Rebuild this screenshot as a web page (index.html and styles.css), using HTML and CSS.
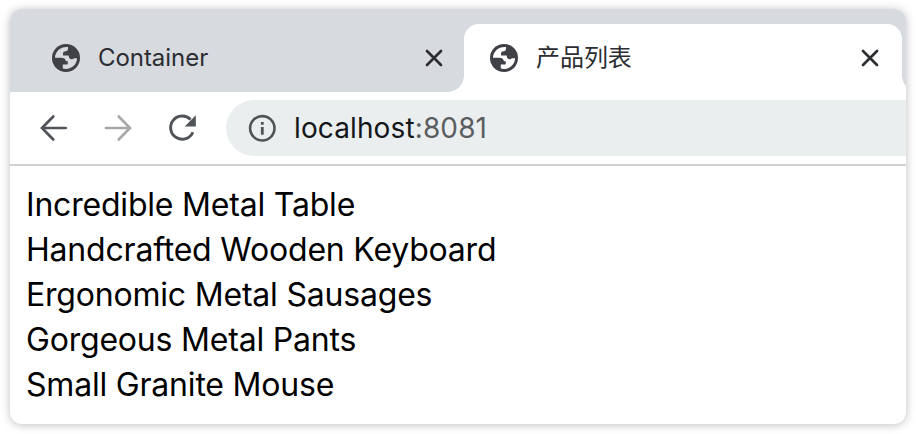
FILE: index.html
```html
<!DOCTYPE html>
<html lang="zh">
<head>
<meta charset="utf-8">
<title>产品列表</title>
<link rel="stylesheet" href="styles.css">
</head>
<body>
<svg class="defs" width="0" height="0" aria-hidden="true">
  <symbol id="globe" viewBox="0 0 28 28">
    <circle cx="14" cy="14" r="14" fill="#3f4147"/>
    <path class="land" d="M16 3 C9 2.2 3.2 7 3 13.8 H9 Q13.2 13.8 14 17.2 H15.8 V19.4 Q15.8 20.6 14 20.6 H10.8 V24.6 C18.5 26.4 25 21 25 14.3 H22 Q20.5 15.6 18.6 15 Q16.6 14.2 16.6 11.6 H11 V9.6 Q11 7.2 13.5 7.2 H14 Q16 7 16 5 Z"/>
  </symbol>
  <symbol id="close" viewBox="0 0 18 18">
    <path d="M2 2 L16 16 M16 2 L2 16" fill="none" stroke="#2b2d30" stroke-width="2.7" stroke-linecap="round"/>
  </symbol>
</svg>
<main class="window">
  <div class="tabs">
    <div class="tab">
      <svg class="globe"><use href="#globe"/></svg>
      <span class="title">Container</span>
      <svg class="close"><use href="#close"/></svg>
    </div>
    <div class="tab active">
      <svg class="globe"><use href="#globe"/></svg>
      <span class="title">产品列表</span>
      <svg class="close"><use href="#close"/></svg>
    </div>
  </div>
  <div class="toolbar">
    <svg class="nav" viewBox="0 0 28 28"><path d="M25.7 14 H2 M13.3 2.5 L2 14 L13.3 25.5" fill="none" stroke="#505357" stroke-width="2.7" stroke-linecap="round"/></svg>
    <svg class="nav" viewBox="0 0 28 28"><path d="M2 14 H26 M14.7 2.5 L26 14 L14.7 25.5" fill="none" stroke="#a7a8aa" stroke-width="2.7" stroke-linecap="round"/></svg>
    <svg class="nav" viewBox="0 0 28 28"><path d="M22.6 5.6 A11.6 11.6 0 1 0 24.9 18.2" fill="none" stroke="#505357" stroke-width="2.9"/><path d="M27.8 1.3 V12.4 H16.7 Z" fill="#505357"/></svg>
    <div class="address">
      <svg class="info" viewBox="0 0 28 28"><circle cx="14.3" cy="14.3" r="12.2" fill="none" stroke="#505357" stroke-width="2.6"/><path d="M14.3 13 V20.8 M14.3 7.9 V10.7" stroke="#505357" stroke-width="2.8"/></svg>
      <span class="url">localhost<span class="port">:8081</span></span>
    </div>
  </div>
  <ul class="products">
    <li>Incredible Metal Table</li>
    <li>Handcrafted Wooden Keyboard</li>
    <li>Ergonomic Metal Sausages</li>
    <li>Gorgeous Metal Pants</li>
    <li>Small Granite Mouse</li>
  </ul>
</main>
</body>
</html>
```
FILE: styles.css
```css
* { box-sizing: border-box; }
body {
  margin: 0;
  padding: 9px 10px 10px;
  height: 434px;
  overflow: hidden;
  background: #fff;
  font-family: Inter, "Noto Sans CJK SC", sans-serif;
}
.defs { position: absolute; }
.window {
  height: 415px;
  border-radius: 12px;
  overflow: hidden;
  background: #fff;
  box-shadow: 0 1px 10px rgba(0, 0, 0, .26);
}
.tabs {
  display: flex;
  height: 83px;
  padding-top: 15px;
  background: #d7dadf;
}
.tab {
  display: flex;
  align-items: center;
  width: 454px;
  padding: 0 21px 0 42px;
  color: #2b2d32;
  --land: #d7dadf;
}
.tab.active {
  position: relative;
  width: 438px;
  padding: 0 23px 0 26px;
  border-radius: 15px 15px 0 0;
  background: #fff;
  --land: #fff;
}
.tab.active::before,
.tab.active::after {
  content: "";
  position: absolute;
  bottom: 0;
  width: 16px;
  height: 16px;
}
.tab.active::before {
  right: 100%;
  background: radial-gradient(circle at 0 0, transparent 15.5px, #fff 16px);
}
.tab.active::after {
  left: 100%;
  background: radial-gradient(circle at 100% 0, transparent 15.5px, #fff 16px);
}
.land { fill: var(--land); }
.globe { width: 28px; height: 28px; }
.title {
  flex: 1;
  margin-left: 18px;
  font-size: 24px;
  line-height: 32px;
  letter-spacing: -.05px;
}
.close { width: 18px; height: 18px; }
.toolbar {
  display: flex;
  align-items: center;
  gap: 36px;
  height: 74px;
  padding-left: 30px;
  border-bottom: 2px solid #d0d1d3;
}
.nav { width: 28px; height: 28px; }
.address {
  flex: 1;
  display: flex;
  align-items: center;
  gap: 18px;
  height: 56px;
  margin-left: -6px;
  padding-left: 22px;
  border-radius: 28px 0 0 28px;
  background: #ebeeef;
}
.info { width: 28px; height: 28px; }
.url { font-size: 28px; line-height: 36px; letter-spacing: .12px; color: #141619; }
.port { color: #5b5e61; }
.products {
  margin: 0;
  padding: 16px;
  list-style: none;
  font-size: 32px;
  line-height: 45px;
  letter-spacing: -.2px;
  color: #000;
}
```
